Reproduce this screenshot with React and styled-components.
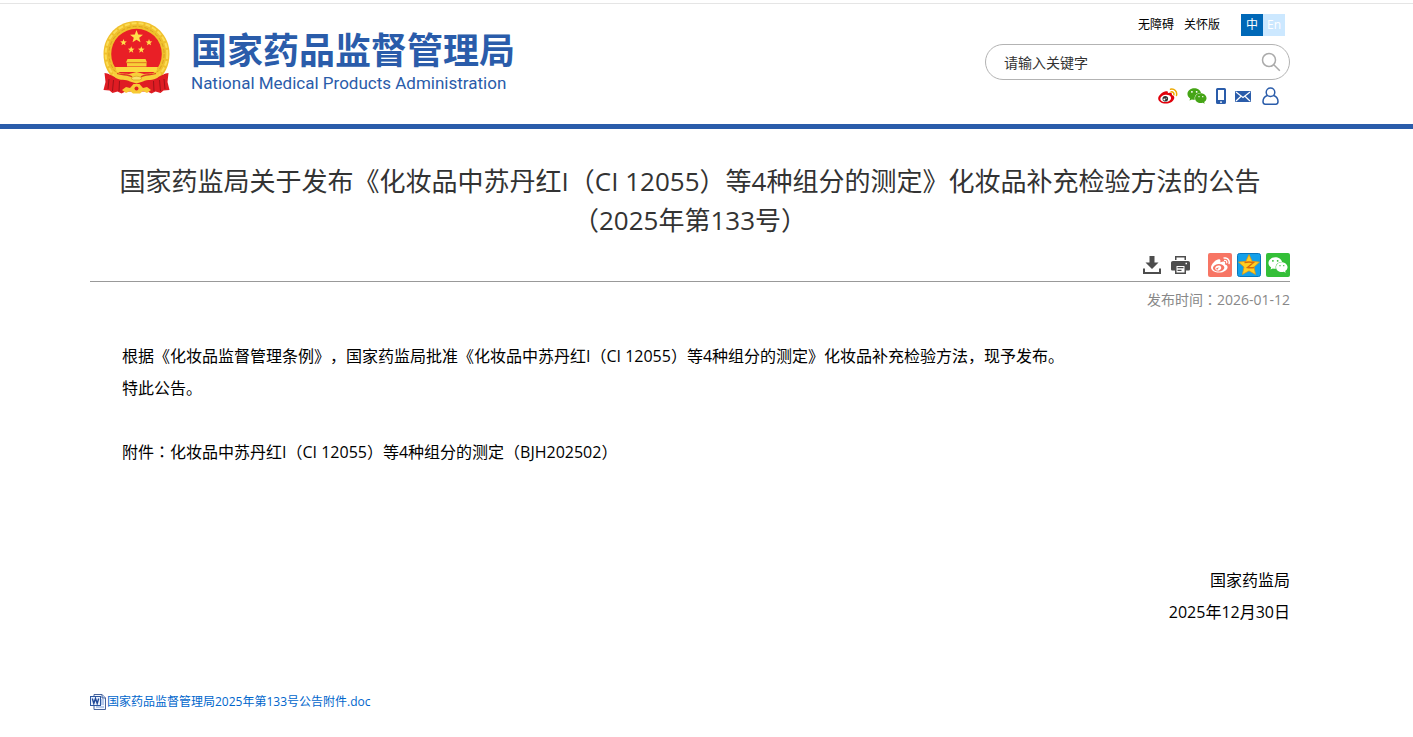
import React from "react";
import styled, { createGlobalStyle } from "styled-components";
import { FaWeixin, FaWeibo } from "react-icons/fa";

const BLUE = "#2a5caa";

const GlobalStyle = createGlobalStyle`
  *, *::before, *::after { box-sizing: border-box; }
  body {
    margin: 0;
    background: #fff;
    color: #000;
    font-family: "Open Sans", "Noto Sans CJK SC", sans-serif;
    font-size: 16px;
    text-spacing-trim: space-all;
  }
  h1, p { margin: 0; font-weight: 400; }
  a { color: inherit; text-decoration: none; }
  button { padding: 0; border: 0; background: none; font: inherit; cursor: pointer; }
  svg { display: block; flex: none; }
`;

const Page = styled.div`
  padding-top: 3px;
`;

const Header = styled.header`
  border-top: 1px solid #e5e5e5;
  border-bottom: 5px solid ${BLUE};
  padding-right: 33px;
`;

const Container = styled.div`
  max-width: 1200px;
  margin: 0 auto;
`;

const HeaderInner = styled(Container)`
  display: flex;
  justify-content: space-between;
  min-height: 120px;
`;

const Brand = styled.a`
  display: flex;
  align-items: flex-start;
  gap: 21px;
  padding: 17px 0 0 13px;
`;

const BrandText = styled.span`
  display: flex;
  flex-direction: column;
  gap: 4px;
  padding-top: 8px;
  color: ${BLUE};
  white-space: nowrap;
`;

const BrandName = styled.span`
  font: 700 36px/38px "Noto Sans CJK SC", sans-serif;
`;

const BrandEnglish = styled.span`
  font: 400 17px/24px Roboto, sans-serif;
`;

const Tools = styled.div`
  display: flex;
  flex-direction: column;
  width: 305px;
  padding-top: 10px;
`;

const TopLinks = styled.nav`
  display: flex;
  justify-content: flex-end;
  align-items: center;
  gap: 10px;
  padding-right: 5px;
  font-size: 12px;
  line-height: 22px;
`;

const Languages = styled.span`
  display: flex;
  margin-left: 11px;
`;

const Language = styled.a`
  width: 22px;
  height: 22px;
  text-align: center;
  color: #fff;
  background: ${(p) => (p.$active ? "#0068b7" : "#cce8ff")};
`;

const SearchBox = styled.form`
  display: flex;
  align-items: center;
  height: 36px;
  margin-top: 8px;
  padding: 0 8px 0 18px;
  border: 1px solid #b3b3b3;
  border-radius: 18px;
`;

const SearchInput = styled.input`
  flex: 1;
  min-width: 0;
  padding: 0;
  border: 0;
  outline: 0;
  background: none;
  font: inherit;
  font-size: 14px;
  &::placeholder { color: #333; opacity: 1; }
`;

const QuickIcons = styled.div`
  display: flex;
  justify-content: flex-end;
  align-items: center;
  gap: 9px;
  height: 20px;
  margin-top: 6px;
  padding-right: 11px;
`;

const Main = styled.main`
  padding: 33px 33px 24px 0;
`;

const Title = styled.h1`
  font-size: 26px;
  line-height: 39px;
  text-align: center;
  color: #333;
`;

const ShareBar = styled.div`
  display: flex;
  justify-content: flex-end;
  align-items: center;
  gap: 5px;
  margin-top: 13px;
  padding-bottom: 4px;
  border-bottom: 1px solid #999;
`;

const PageActions = styled.div`
  display: flex;
  gap: 10px;
  margin-right: 13px;
`;

const ShareButton = styled.button`
  display: flex;
  align-items: center;
  justify-content: center;
  width: 24px;
  height: 24px;
  border-radius: 2px;
  color: #fff;
  background: ${(p) => p.$color};
`;

const PublishDate = styled.p`
  padding-top: 8px;
  font-size: 14px;
  line-height: 20px;
  text-align: right;
  color: #888;
`;

const Article = styled.article`
  padding-top: 30px;
  line-height: 32px;
`;

const Paragraph = styled.p`
  text-indent: 32px;
  margin-bottom: ${(p) => (p.$spaceAfter || 0) * 32}px;
`;

const Signature = styled.p`
  text-align: right;
`;

const Centered = styled.span`
  font-family: "Noto Sans CJK TC", sans-serif;
  line-height: 1;
`;

const Attachment = styled.a`
  display: inline-flex;
  align-items: center;
  gap: 1px;
  margin-top: 64px;
  font-size: 12px;
  line-height: 20px;
  color: #0066cc;
`;

const star = (cx, cy, r) =>
  Array.from({ length: 10 }, (_, i) => {
    const a = (Math.PI / 5) * i - Math.PI / 2;
    const d = i % 2 ? r * 0.42 : r;
    return `${(cx + d * Math.cos(a)).toFixed(2)},${(cy + d * Math.sin(a)).toFixed(2)}`;
  }).join(" ");

const Emblem = () => (
  <svg width="67" height="73" viewBox="0 0 67 73" aria-hidden="true">
    <path d="M33.500 0C52 0 66.500 14.500 66.500 33c0 12-5 21-13 27h-40C5.500 54 .500 45 .500 33 .500 14.500 15 0 33.500 0z" fill="#f0c02c" />
    <circle cx="33.500" cy="33" r="30.800" fill="none" stroke="#fbdc55" strokeWidth="2" strokeDasharray="5 2" />
    <circle cx="33.500" cy="33" r="27.600" fill="none" stroke="#d9a422" strokeWidth="1" strokeDasharray="4 2" />
    <circle cx="33.500" cy="33" r="25.300" fill="#e91f26" />
    <g fill="#ffdf4a">
      <polygon points={star(33.5, 15.8, 6.8)} />
      <polygon points={star(20.5, 21.500, 3.500)} />
      <polygon points={star(46, 21.500, 3.500)} />
      <polygon points={star(28.200, 28.800, 3.500)} />
      <polygon points={star(38.300, 28.800, 3.500)} />
    </g>
    <path d="M24.500 38h18l1.500 3.500H23zM24 42h19.500v3.500H24z" fill="#f8cf38" />
    <path d="M23 41.800h21" stroke="#d38e18" strokeWidth=".6" />
    <path d="M12 46h43l-2 5H14z" fill="#fbd941" />
    <path d="M1.500 52c4 0 7 3 10.500 4h43c3.500-1 6.500-4 10.500-4l-1 9 2 8-6 .5-3 2.500-5-1.500-4 2-4-2H22.500l-4 2-4-2-5 1.500-3-2.500-6-.5 2-8z" fill="#df1c23" />
    <path d="M6 58l-1 10M10.500 59l-1 11M16.500 60l-.5 10M61 58l1 10M56.500 59l1 11M50.500 60l.5 10" stroke="#9d1319" strokeWidth="1" />
    <path d="M8 48c6 6 13 4 18 5l7.500-2 7.500 2c5-1 12 1 18-5l-4 8.500c-5 3.500-11 1.500-15 4l-6.500 2-6.500-2c-4-2.500-10-.5-15-4z" fill="#f8cf3a" />
    <path d="M14 52.500c6 2 11 .5 15 3.500M53 52.500c-6 2-11 .5-15 3.500" fill="none" stroke="#dd3a22" strokeWidth="1.300" />
    <path d="M28 57.500c2.500-3 8.500-3 11 0l-2.500 1.500h-6z" fill="#fae06a" stroke="#d99c20" strokeWidth=".7" />
    <path d="m19 69 4-3 4 1 3.500-4h6l3.500 4 4-1 4 3-4 3-4-2-3 2.500h-7L27 70l-4 2z" fill="#f7ca33" />
    <circle cx="33.500" cy="67.500" r="2" fill="#df1c23" />
  </svg>
);

const SearchIcon = () => (
  <svg width="20" height="20" viewBox="0 0 20 20" fill="none" stroke="#aaa" strokeWidth="1.500" aria-hidden="true">
    <circle cx="8" cy="8" r="6.500" />
    <path d="m12.800 12.800 6 6" />
  </svg>
);

const WeiboColour = () => (
  <svg width="20" height="16" viewBox="0 0 20 16" aria-hidden="true">
    <path d="M8 3.300c1.400-.3 2.300.3 1.800 2 2.400-.9 4.700-.6 4.100 1.700 1.700.5 2.800 1.600 2.300 3.500C15.400 13.600 11.800 15.500 7.700 15.500 3.500 15.500.200 13.400.200 10.500.200 7.400 5 3.600 8 3.300z" fill="#e0000b" />
    <ellipse cx="7.700" cy="10.400" rx="5.400" ry="3.600" transform="rotate(-8 7.700 10.400)" fill="#fff" />
    <circle cx="7.300" cy="10.800" r="2.800" fill="#333" />
    <circle cx="6.300" cy="11.600" r="1" fill="#fff" />
    <circle cx="8.200" cy="10.200" r=".5" fill="#fff" />
    <g fill="none" stroke="#eda900" strokeWidth="1.500" strokeLinecap="round">
      <path d="M12.500 1.200c3.900-.8 6.900 2.200 6 6.200" />
      <path d="M13 3.900c1.900-.3 3.300 1.100 2.900 2.900" />
    </g>
  </svg>
);

const PhoneIcon = () => (
  <svg width="10" height="16" viewBox="0 0 10 16" aria-hidden="true">
    <path fillRule="evenodd" fill={BLUE} d="M1.500 0h7A1.500 1.500 0 0 1 10 1.500v13A1.500 1.500 0 0 1 8.500 16h-7A1.500 1.500 0 0 1 0 14.500v-13A1.500 1.500 0 0 1 1.500 0zM2 2v10h6V2zM4 13.500v1.200h2v-1.200z" />
  </svg>
);

const MailIcon = () => (
  <svg width="16" height="11" viewBox="0 0 16 11" aria-hidden="true">
    <rect width="16" height="11" rx="1" fill={BLUE} />
    <path d="m1 1 7 5.500L15 1M1 10l4.800-4.500M15 10l-4.800-4.500" fill="none" stroke="#fff" strokeWidth="1.200" />
  </svg>
);

const UserIcon = () => (
  <svg width="19" height="18" viewBox="-2 0 19 18" fill="none" stroke={BLUE} strokeWidth="1.500" aria-hidden="true">
    <circle cx="8.500" cy="5.200" r="4.300" />
    <path d="M5.500 8.500C2.500 9.500 1 11.800 1 14.500c0 1.800.7 2.700 2.200 2.700h10.600c1.500 0 2.200-.9 2.200-2.700 0-2.700-1.500-5-4.500-6" />
  </svg>
);

const DownloadIcon = () => (
  <svg width="18" height="18" viewBox="0 0 18 18" fill="#4d4d4d" aria-hidden="true">
    <path d="M6.500 0h5v6.500h4L9 13 2.500 6.500h4zM0 12.500h2v3.500h14v-3.500h2V18H0z" />
  </svg>
);

const PrintIcon = () => (
  <svg width="19" height="18" viewBox="0 0 19 18" aria-hidden="true">
    <path fill="#4d4d4d" fillRule="evenodd" d="M4 0h11v4H4zM2 5h15c1.300 0 2 .8 2 2v6c0 1-.6 1.500-1.500 1.500H15V18H4v-3.500H1.500C.6 14.500 0 14 0 13V7c0-1.200.7-2 2-2zM5.500 10v6.500h8V10zM14.500 6.700v1.500H16V6.700z" />
    <path d="M5.500 1.500h8V5h-8z" fill="#fff" />
    <path d="M6.500 11.700h6M6.500 14.300h4" stroke="#4d4d4d" strokeWidth="1.300" />
  </svg>
);

const QzoneIcon = () => (
  <svg width="24" height="24" viewBox="0 0 24 24" aria-hidden="true">
    <rect x=".5" y=".5" width="23" height="23" rx="2" fill="#13a0ea" stroke="#0876bd" />
    <path d="m12 1.500 3.100 6.800 7.400.8-5.500 5 1.600 7.400-6.600-3.700-6.600 3.700L7 14.100l-5.500-5 7.400-.8z" fill="#ffce22" stroke="#e7930a" strokeWidth=".7" />
    <path d="M7.500 9.500c3-.7 6-.7 9 0l-6 5c2.300.5 4.500.4 6.500 0" fill="none" stroke="#d96b0a" strokeWidth="1.500" />
  </svg>
);

const WordIcon = () => (
  <svg width="16" height="16" viewBox="0 0 16 16" aria-hidden="true">
    <path d="M4 .5h8l3.500 3.500v11.500H4z" fill="#f5f9ff" stroke="#47639b" />
    <path d="M12 .5V4h3.500" fill="#b9cdee" stroke="#47639b" />
    <path d="M11 6h3M11 8h3M11 10h3M6 13h8" stroke="#7d9ed6" />
    <rect x=".5" y="2.500" width="10" height="9" fill="#e8f0fc" stroke="#2c56a0" />
    <path d="m2.300 4.500 1.500 5 1.700-5 1.700 5 1.500-5" fill="none" stroke="#1e4797" strokeWidth="1.400" />
  </svg>
);

export default function App() {
  return (
    <Page>
      <GlobalStyle />
      <Header>
        <HeaderInner>
          <Brand href="#">
            <Emblem />
            <BrandText>
              <BrandName>国家药品监督管理局</BrandName>
              <BrandEnglish>National Medical Products Administration</BrandEnglish>
            </BrandText>
          </Brand>
          <Tools>
            <TopLinks>
              <a href="#">无障碍</a>
              <a href="#">关怀版</a>
              <Languages>
                <Language href="#" $active>中</Language>
                <Language href="#">En</Language>
              </Languages>
            </TopLinks>
            <SearchBox role="search" onSubmit={(e) => e.preventDefault()}>
              <SearchInput type="text" aria-label="请输入关键字" placeholder="请输入关键字" />
              <button type="submit" aria-label="搜索"><SearchIcon /></button>
            </SearchBox>
            <QuickIcons>
              <a href="#" aria-label="微博"><WeiboColour /></a>
              <a href="#" aria-label="微信"><FaWeixin size={20} color="#45a516" /></a>
              <a href="#" aria-label="手机版"><PhoneIcon /></a>
              <a href="#" aria-label="邮箱"><MailIcon /></a>
              <a href="#" aria-label="个人中心"><UserIcon /></a>
            </QuickIcons>
          </Tools>
        </HeaderInner>
      </Header>
      <Main>
        <Container>
          <Title>
            国家药监局关于发布《化妆品中苏丹红I（CI 12055）等4种组分的测定》化妆品补充检验方法的公告
            <br />
            （2025年第133号）
          </Title>
          <ShareBar>
            <PageActions>
              <button type="button" aria-label="下载"><DownloadIcon /></button>
              <button type="button" aria-label="打印"><PrintIcon /></button>
            </PageActions>
            <ShareButton type="button" aria-label="分享到微博" $color="#f77564"><FaWeibo size={19} /></ShareButton>
            <ShareButton type="button" aria-label="分享到QQ空间"><QzoneIcon /></ShareButton>
            <ShareButton type="button" aria-label="分享到微信" $color="#34bf38"><FaWeixin size={20} /></ShareButton>
          </ShareBar>
          <PublishDate>发布时间<Centered>：</Centered>2026-01-12</PublishDate>
          <Article>
            <Paragraph>
              根据《化妆品监督管理条例》，国家药监局批准《化妆品中苏丹红I（CI 12055）等4种组分的测定》化妆品补充检验方法，现予发布。
            </Paragraph>
            <Paragraph $spaceAfter={1}>特此公告。</Paragraph>
            <Paragraph $spaceAfter={3}>
              附件<Centered>：</Centered>化妆品中苏丹红I（CI 12055）等4种组分的测定（BJH202502）
            </Paragraph>
            <Signature>国家药监局</Signature>
            <Signature>2025年12月30日</Signature>
          </Article>
          <Attachment href="#">
            <WordIcon />
            国家药品监督管理局2025年第133号公告附件.doc
          </Attachment>
        </Container>
      </Main>
    </Page>
  );
}
